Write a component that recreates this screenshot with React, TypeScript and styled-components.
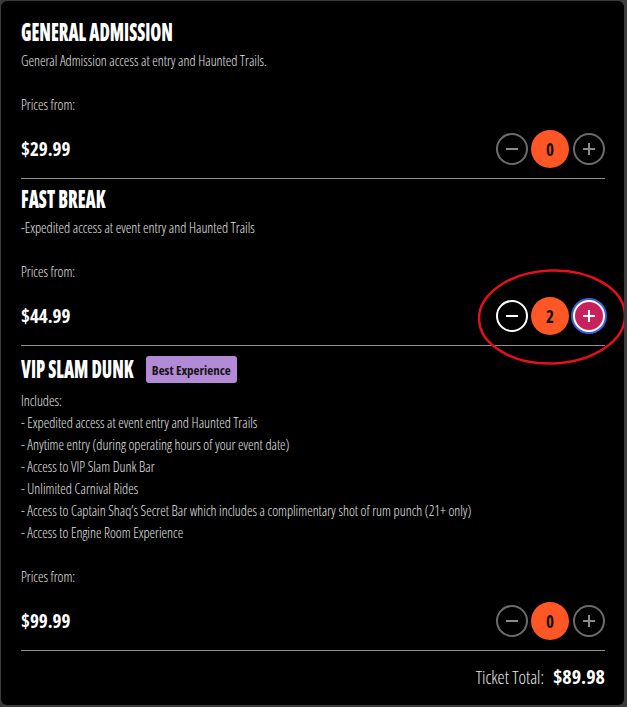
import React from "react";
import styled, { createGlobalStyle, css } from "styled-components";

const GlobalStyle = createGlobalStyle`
  html, body { margin: 0; padding: 0; background: #3b3b3b; }
  body { font-family: "Open Sans", "Liberation Sans", sans-serif; font-stretch: 75%; }
  * { box-sizing: border-box; }
`;

const Page = styled.div`
  padding: 1px 3px 2px 1px;
  height: 707px;
`;

const Panel = styled.div`
  position: relative;
  height: 704px;
  background: #000;
  border-radius: 6px;
  padding: 11px 19px 0 20px;
  color: #e8e8e8;
  overflow: hidden;
`;

const Section = styled.section`
  padding-top: 7px;
  padding-bottom: 10px;
  border-bottom: 1px solid #8a938f;
`;

const Header = styled.div`
  display: flex;
  align-items: center;
  min-height: 26px;
`;

const Title = styled.h2<{ $trim?: number }>`
  margin: 0 ${(p) => (p.$trim ? -p.$trim : 0)}px 0 0;
  font-size: 24px;
  line-height: 26px;
  font-weight: 800;
  font-stretch: 75%;
  color: #fff;
  white-space: nowrap;
  transform: scaleX(0.737);
  transform-origin: left center;
`;

const Badge = styled.span`
  margin: 3px 0 2px 11px;
  height: 27px;
  padding: 0 6px;
  display: inline-flex;
  align-items: center;
  background: #b38ad6;
  border-radius: 3px;
  color: #141414;
  font-size: 13px;
  font-weight: 700;
`;

const Text = styled.div<{ $gap?: number }>`
  margin-top: ${(p) => p.$gap ?? 5}px;
  font-size: 14px;
  font-weight: 300;
  line-height: 22px;
  color: #e4e4e4;
  white-space: nowrap;
`;

const PriceRow = styled.div`
  margin-top: 14px;
  height: 38px;
  display: flex;
  align-items: center;
  justify-content: space-between;
`;

const Price = styled.div`
  font-size: 19px;
  font-weight: 700;
  color: #fff;
`;

const Stepper = styled.div`
  display: flex;
  align-items: center;
`;

const RoundBtn = styled.button<{ $state: "idle" | "ready" | "focus" }>`
  width: 32px;
  height: 32px;
  border-radius: 50%;
  padding: 0;
  display: flex;
  align-items: center;
  justify-content: center;
  background: transparent;
  border: 2px solid #6c6c6c;
  color: #8c8c8c;
  ${(p) =>
    p.$state === "ready" &&
    css`
      border-color: #fff;
      color: #fff;
    `}
  ${(p) =>
    p.$state === "focus" &&
    css`
      background: #c8215c;
      border-color: #fff;
      color: #fff;
      box-shadow: 0 0 0 2px #3a5fd8;
    `}
`;

const Count = styled.div`
  width: 38px;
  height: 38px;
  margin: 0 4px 0 3px;
  border-radius: 50%;
  background: #ff5626;
  color: #111;
  display: flex;
  align-items: center;
  justify-content: center;
  font-size: 17px;
  font-weight: 700;
`;

const Footer = styled.div`
  display: flex;
  justify-content: flex-end;
  align-items: baseline;
  gap: 9px;
  padding-top: 13px;
  line-height: 26px;
`;

const TotalLabel = styled.span`
  font-size: 18px;
  font-weight: 300;
  color: #e8e8e8;
`;

const TotalValue = styled.span`
  font-size: 20px;
  font-weight: 700;
  color: #fff;
`;

const Annotation = styled.svg`
  position: absolute;
  left: 0;
  top: 0;
  pointer-events: none;
`;

const Icon = ({ plus }: { plus?: boolean }) => (
  <svg width="14" height="14" viewBox="0 0 14 14">
    <line x1="1" y1="7" x2="13" y2="7" stroke="currentColor" strokeWidth="2" />
    {plus && <line x1="7" y1="1" x2="7" y2="13" stroke="currentColor" strokeWidth="2" />}
  </svg>
);

type Ticket = {
  name: string;
  badge?: string;
  trim?: number;
  lines: string[];
  price: string;
  qty: number;
  active?: boolean;
};

const tickets: Ticket[] = [
  {
    name: "GENERAL ADMISSION",
    lines: ["General Admission access at entry and Haunted Trails."],
    price: "$29.99",
    qty: 0,
  },
  {
    name: "FAST BREAK",
    lines: ["-Expedited access at event entry and Haunted Trails"],
    price: "$44.99",
    qty: 2,
    active: true,
  },
  {
    name: "VIP SLAM DUNK",
    badge: "Best Experience",
    trim: 39,
    lines: [
      "Includes:",
      "- Expedited access at event entry and Haunted Trails",
      "- Anytime entry (during operating hours of your event date)",
      "- Access to VIP Slam Dunk Bar",
      "- Unlimited Carnival Rides",
      "- Access to Captain Shaq\u2019s Secret Bar which includes a complimentary shot of rum punch (21+ only)",
      "- Access to Engine Room Experience",
    ],
    price: "$99.99",
    qty: 0,
  },
];

export default function App() {
  return (
    <>
      <GlobalStyle />
      <Page>
        <Panel>
          {tickets.map((t) => (
            <Section key={t.name}>
              <Header>
                <Title $trim={t.trim}>{t.name}</Title>
                {t.badge && <Badge>{t.badge}</Badge>}
              </Header>
              {t.lines.map((l, i) => (
                <Text key={i} $gap={i === 0 ? 5 : 0}>
                  {l}
                </Text>
              ))}
              <Text $gap={22}>Prices from:</Text>
              <PriceRow>
                <Price>{t.price}</Price>
                <Stepper>
                  <RoundBtn $state={t.active ? "ready" : "idle"} aria-label="decrease">
                    <Icon />
                  </RoundBtn>
                  <Count>{t.qty}</Count>
                  <RoundBtn $state={t.active ? "focus" : "idle"} aria-label="increase">
                    <Icon plus />
                  </RoundBtn>
                </Stepper>
              </PriceRow>
            </Section>
          ))}
          <Footer>
            <TotalLabel>Ticket Total:</TotalLabel>
            <TotalValue>$89.98</TotalValue>
          </Footer>
          <Annotation width="623" height="704" viewBox="0 0 623 704">
            <ellipse
              cx="551"
              cy="316"
              rx="73"
              ry="46.5"
              fill="none"
              stroke="#e5101c"
              strokeWidth="2.5"
              transform="rotate(-2 551 316)"
            />
          </Annotation>
        </Panel>
      </Page>
    </>
  );
}
